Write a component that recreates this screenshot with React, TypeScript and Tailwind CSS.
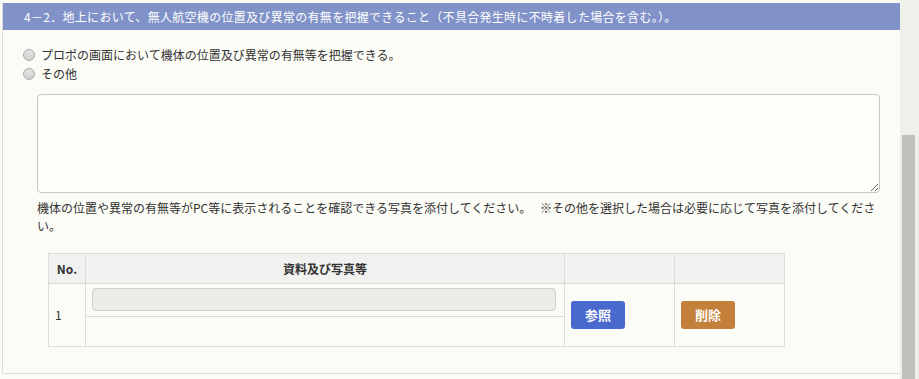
import React from "react";

function Radio({ label }: { label: string }) {
    return (
        <label className="flex items-center h-[19px] gap-[6px]">
            <span className="w-[12px] h-[12px] rounded-full border border-[#a9a9a9] bg-gradient-to-b from-[#e6e6e6] to-[#cfcfcf]" />
            <span>{label}</span>
        </label>
    );
}

export default function App() {
    return (
        <div
            className="flex w-[919px] h-[379px] bg-[#fcfcf7] text-[#333] text-[12px] overflow-hidden"
            style={{ fontFamily: '"Noto Sans CJK JP", "Noto Sans", sans-serif' }}
        >
            <div className="flex-1 pt-[3px] pl-[2px]">
                <div className="border-l border-b border-[#dcdcd8] h-[371px]">
                    <div className="h-[27px] bg-[#8092c8] text-white text-[12px] tracking-[0.3px] flex items-center pl-[21px]">
                        4－2．地上において、無人航空機の位置及び異常の有無を把握できること（不具合発生時に不時着した場合を含む。）。
                    </div>
                    <div className="pl-[20px] pt-[15px] flex flex-col">
                        <Radio label="プロポの画面において機体の位置及び異常の有無等を把握できる。" />
                        <Radio label="その他" />
                    </div>
                    <div className="pl-[34px] pt-[11px]">
                        <textarea className="block w-[843px] h-[99px] border border-[#c8c8c4] rounded-[4px] bg-[#fdfdf9]" />
                        <p className="w-[843px] leading-[18px] mt-[6px]">
                            機体の位置や異常の有無等がPC等に表示されることを確認できる写真を添付してください。　 ※その他を選択した場合は必要に応じて写真を添付してください。
                        </p>
                        <table className="mt-[18px] ml-[11px] w-[737px] border-collapse">
                            <thead>
                                <tr className="bg-[#f1f2f0] h-[30px]">
                                    <th className="w-[37px] border border-[#dcdcd8] font-bold text-[12px] text-center">No.</th>
                                    <th className="border border-[#dcdcd8] font-bold text-[12px] text-center">資料及び写真等</th>
                                    <th className="w-[110px] border border-[#dcdcd8]"></th>
                                    <th className="w-[110px] border border-[#dcdcd8]"></th>
                                </tr>
                            </thead>
                            <tbody>
                                <tr className="h-[63px]">
                                    <td className="border border-[#dcdcd8] pl-[6px]">1</td>
                                    <td className="border border-[#dcdcd8] p-0 align-top">
                                        <div className="h-[33px] border-b border-[#dcdcd8] pt-[4px] pl-[6px] pr-[8px]">
                                            <div className="h-[23px] rounded-[4px] border border-[#cfcfcb] bg-[#ebebe8]" />
                                        </div>
                                    </td>
                                    <td className="border border-[#dcdcd8] pl-[6px]">
                                        <button className="w-[54px] h-[28px] rounded-[3px] bg-[#4a69cf] text-white font-bold text-[13px]">参照</button>
                                    </td>
                                    <td className="border border-[#dcdcd8] pl-[6px]">
                                        <button className="w-[54px] h-[28px] rounded-[3px] bg-[#c2803a] text-white font-bold text-[13px]">削除</button>
                                    </td>
                                </tr>
                            </tbody>
                        </table>
                    </div>
                </div>
            </div>
            <div className="w-[19px] bg-[#f0f0eb] pl-[2px] pr-[4px] pt-[135px]">
                <div className="h-full bg-[#c1c1bc]" />
            </div>
        </div>
    );
}
